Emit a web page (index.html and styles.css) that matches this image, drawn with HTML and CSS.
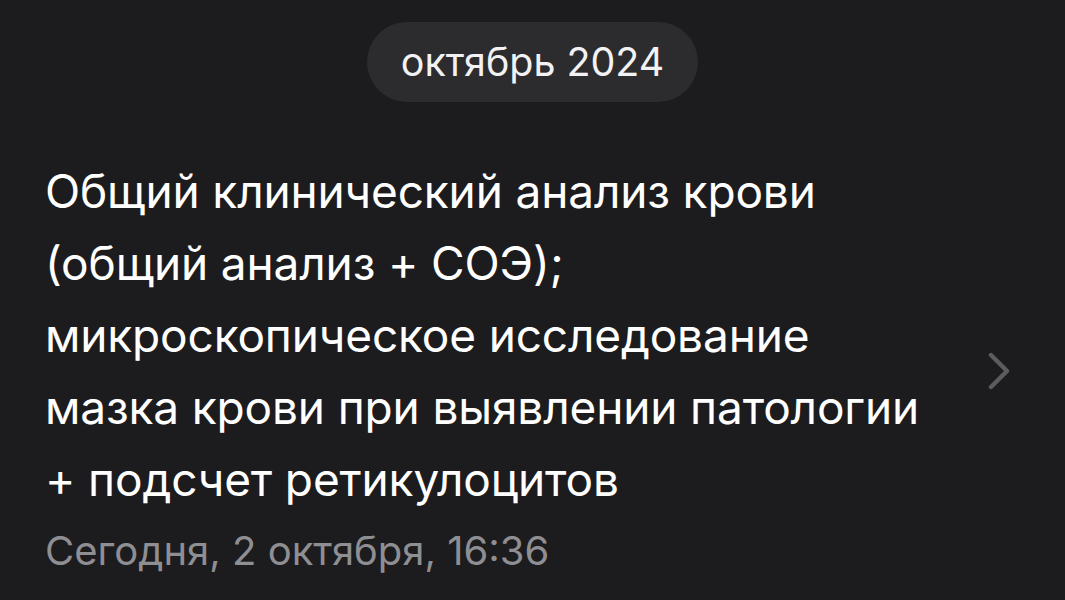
FILE: index.html
```html
<!DOCTYPE html>
<html lang="ru">
<head>
<meta charset="utf-8">
<link rel="stylesheet" href="styles.css">
</head>
<body>
<div class="header">
  <div class="pill">октябрь 2024</div>
</div>
<div class="row">
  <div class="content">
    <div class="title">
      <span class="line">Общий клинический анализ крови</span>
      <span class="line">(общий анализ + СОЭ);</span>
      <span class="line">микроскопическое исследование</span>
      <span class="line">мазка крови при выявлении патологии</span>
      <span class="line">+ подсчет ретикулоцитов</span>
    </div>
    <div class="date">Сегодня, 2 октября, 16:36</div>
  </div>
  <svg class="chev" width="26" height="38" viewBox="0 0 26 38"><path d="M5 3 L21 19 L5 35" fill="none" stroke="#5b5b60" stroke-width="4.4" stroke-linecap="round" stroke-linejoin="round"/></svg>
</div>
</body>
</html>
```
FILE: styles.css
```css
html, body {
  margin: 0;
  padding: 0;
  background: #1c1c1e;
  width: 1065px;
  height: 600px;
  overflow: hidden;
}
body {
  font-family: Inter, "Noto Sans", sans-serif;
  color: #ffffff;
}
.header {
  display: flex;
  justify-content: center;
  padding-top: 22px;
}
.pill {
  height: 80px;
  line-height: 80px;
  padding: 0 34px;
  border-radius: 40px;
  background: #2c2c2f;
  font-size: 39.4px;
  color: #f2f2f4;
}
.row {
  display: flex;
  align-items: center;
  padding: 0 53px 0 45px;
  margin-top: 53px;
}
.content {
  flex: 1;
}
.title {
  font-size: 46px;
  line-height: 72px;
  letter-spacing: -0.15px;
}
.line {
  display: block;
  white-space: nowrap;
}
.date {
  font-size: 40px;
  line-height: 72px;
  color: #8e8e93;
}
.chev {
  flex: none;
}
```
